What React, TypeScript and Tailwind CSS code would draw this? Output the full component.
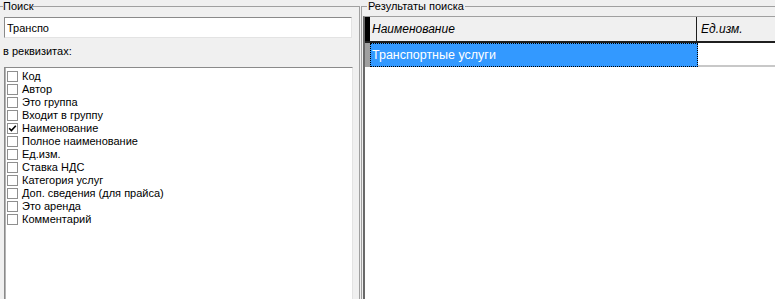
import { useState } from "react"

const fields = [
  "Код",
  "Автор",
  "Это группа",
  "Входит в группу",
  "Наименование",
  "Полное наименование",
  "Ед.изм.",
  "Ставка НДС",
  "Категория услуг",
  "Доп. сведения (для прайса)",
  "Это аренда",
  "Комментарий",
]

const App = () => {
  const [query, setQuery] = useState("Транспо")
  // Which fields are searched
  const [checked, setChecked] = useState<string[]>(["Наименование"])

  const toggle = (name: string) => {
    setChecked((prev) => (prev.includes(name) ? prev.filter((n) => n !== name) : [...prev, name]))
  }

  return (
    <main className="w-[775px] h-[299px] overflow-hidden bg-[#f0f0f0] flex font-['Liberation_Sans',Arial,sans-serif] text-[11px] leading-[13px] text-black">
      {/* Search group */}
      <fieldset className="w-[360px] h-[299px] border-t border-r border-[#a0a0a0] shrink-0">
        <legend className="ml-[3px] px-0 leading-[13px]">Поиск</legend>
        <div className="flex flex-col pl-[4px]">
          <input
            type="text"
            value={query}
            onChange={(e) => setQuery(e.target.value)}
            className="mt-[4px] h-[21px] w-[348px] bg-white border border-t-[#8a8a8a] border-l-[#8a8a8a] border-r-[#e3e3e3] border-b-[#e3e3e3] px-[2px] outline-none text-[11px]"
          />
          <span className="mt-[7px] -ml-[1px] h-[13px]">в реквизитах:</span>
          <div className="mt-[9px] w-[349px] h-[240px] bg-white border border-t-[#8a8a8a] border-l-[#8a8a8a] border-r-[#e3e3e3] border-b-[#e3e3e3] shadow-[inset_1px_0_0_#b4b4b4] pt-[2px]">
            {fields.map((name) => (
              <label key={name} className="flex items-center h-[13px] pl-[2px] gap-[4px] cursor-default">
                <span
                  onClick={() => toggle(name)}
                  className="w-[11px] h-[11px] border border-[#8f8f8f] bg-white flex items-center justify-center"
                >
                  {checked.includes(name) && (
                    <svg width="9" height="9" viewBox="0 0 9 9">
                      <path d="M1.2 4.3 L3.4 6.6 L7.8 1.8" fill="none" stroke="#000" strokeWidth="1.6" />
                    </svg>
                  )}
                </span>
                <span>{name}</span>
              </label>
            ))}
          </div>
        </div>
      </fieldset>

      {/* Results group */}
      <fieldset className="ml-[1px] flex-1 h-[299px] border-t border-l border-[#a0a0a0]">
        <legend className="ml-[5px] px-[1px] leading-[13px]">Результаты поиска</legend>
        <div className="pl-[1px]">
          <div className="mt-[3px] h-[290px] bg-white border-l-2 border-l-[#696969] border-t border-t-[#a0a0a0]">
            <div className="flex h-[26px] bg-[#f0f0f0] border-b-2 border-[#1e1e1e] text-[12px] italic leading-[24px]">
              <div className="w-[5px] bg-black" />
              <div className="w-[327px] px-[2px] border-r border-[#1e1e1e]">Наименование</div>
              <div className="flex-1 px-[4px]">Ед.изм.</div>
            </div>
            <div className="flex h-[24px] text-[12.5px] leading-[22px]">
              <div className="w-[5px] bg-[#a0a0a0]" />
              <div className="w-[328px] bg-[#3399ff] text-white border border-dotted border-black px-[1px]">
                Транспортные услуги
              </div>
              <div className="flex-1 border-b-2 border-[#c8c8c8]" />
            </div>
          </div>
        </div>
      </fieldset>
    </main>
  )
}

export default App
